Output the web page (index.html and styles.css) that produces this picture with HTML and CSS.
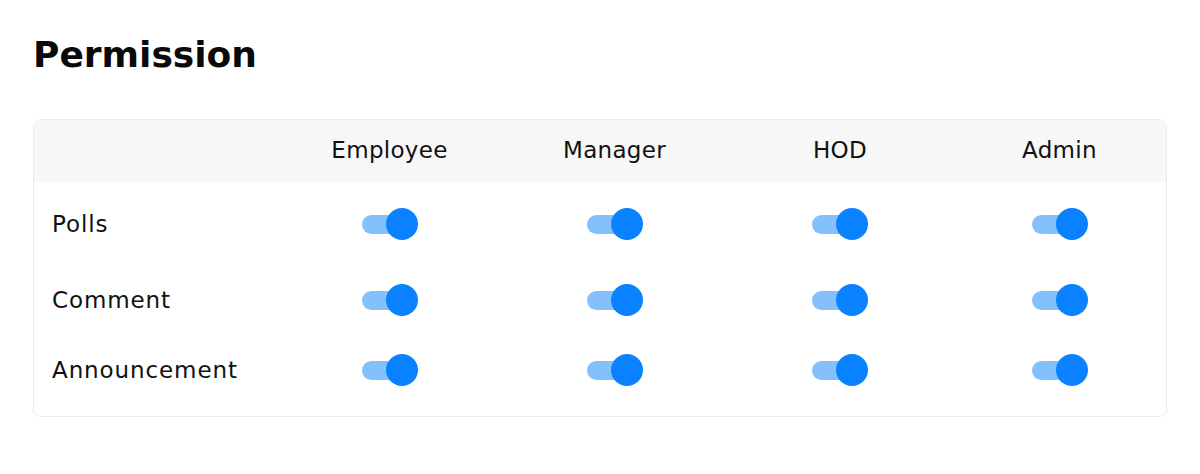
FILE: index.html
```html
<!DOCTYPE html>
<html>
    <head>
        <meta charset="UTF-8">
        <meta name="viewport" content="width=device-width, initial-scale=1.0">
        <title>Permission</title>
        <link rel="stylesheet" href="styles.css">
    </head>
    <body>
        <div class="page">
            <h1 class="title">Permission</h1>
            <div class="perm-card">
                <div class="perm-row perm-head">
                    <div class="cell label"></div>
                    <div class="cell">Employee</div>
                    <div class="cell">Manager</div>
                    <div class="cell">HOD</div>
                    <div class="cell">Admin</div>
                </div>
                <div class="perm-body">
                    <div class="perm-row">
                        <div class="cell label">Polls</div>
                        <div class="cell"><span class="toggle on"><span class="knob"></span></span></div>
                        <div class="cell"><span class="toggle on"><span class="knob"></span></span></div>
                        <div class="cell"><span class="toggle on"><span class="knob"></span></span></div>
                        <div class="cell"><span class="toggle on"><span class="knob"></span></span></div>
                    </div>
                    <div class="perm-row">
                        <div class="cell label">Comment</div>
                        <div class="cell"><span class="toggle on"><span class="knob"></span></span></div>
                        <div class="cell"><span class="toggle on"><span class="knob"></span></span></div>
                        <div class="cell"><span class="toggle on"><span class="knob"></span></span></div>
                        <div class="cell"><span class="toggle on"><span class="knob"></span></span></div>
                    </div>
                    <div class="perm-row">
                        <div class="cell label">Announcement</div>
                        <div class="cell"><span class="toggle on"><span class="knob"></span></span></div>
                        <div class="cell"><span class="toggle on"><span class="knob"></span></span></div>
                        <div class="cell"><span class="toggle on"><span class="knob"></span></span></div>
                        <div class="cell"><span class="toggle on"><span class="knob"></span></span></div>
                    </div>
                </div>
            </div>
        </div>
    </body>
</html>
```

FILE: styles.css
```css
body {
    margin: 0;
    background: #ffffff;
    font-family: 'DejaVu Sans', 'Noto Sans', sans-serif;
    color: #111111;
}

.page {
    padding: 31px 33px 0 33px;
}

.title {
    margin: 0 0 40px 0;
    font-size: 36px;
    font-weight: 700;
    line-height: 48px;
    color: #0a0a0a;
}

.perm-card {
    border: 1px solid #ebebeb;
    border-radius: 8px;
    overflow: hidden;
    background: #ffffff;
}

.perm-row {
    display: grid;
    grid-template-columns: 243px 225px 225px 226px 1fr;
    align-items: center;
    height: 76px;
    font-size: 23px;
    letter-spacing: 0.3px;
}

.perm-head {
    height: 62px;
    background: #f7f7f7;
    padding-bottom: 2px;
    box-sizing: border-box;
}

.perm-body {
    padding: 4px 0 14px 0;
}

.perm-body .perm-row:last-child {
    height: 64px;
}

.cell {
    display: flex;
    justify-content: center;
    align-items: center;
}

.cell.label {
    justify-content: flex-start;
    padding-left: 18px;
    letter-spacing: 0.9px;
}

.toggle {
    position: relative;
    display: inline-block;
    width: 56px;
    height: 32px;
}

.toggle::before {
    content: '';
    position: absolute;
    left: 0;
    top: 7px;
    width: 40px;
    height: 19px;
    border-radius: 10px;
    background: #84c0fb;
}

.knob {
    position: absolute;
    right: 0;
    top: 0;
    width: 32px;
    height: 32px;
    border-radius: 50%;
    background: #0a82ff;
}
```
